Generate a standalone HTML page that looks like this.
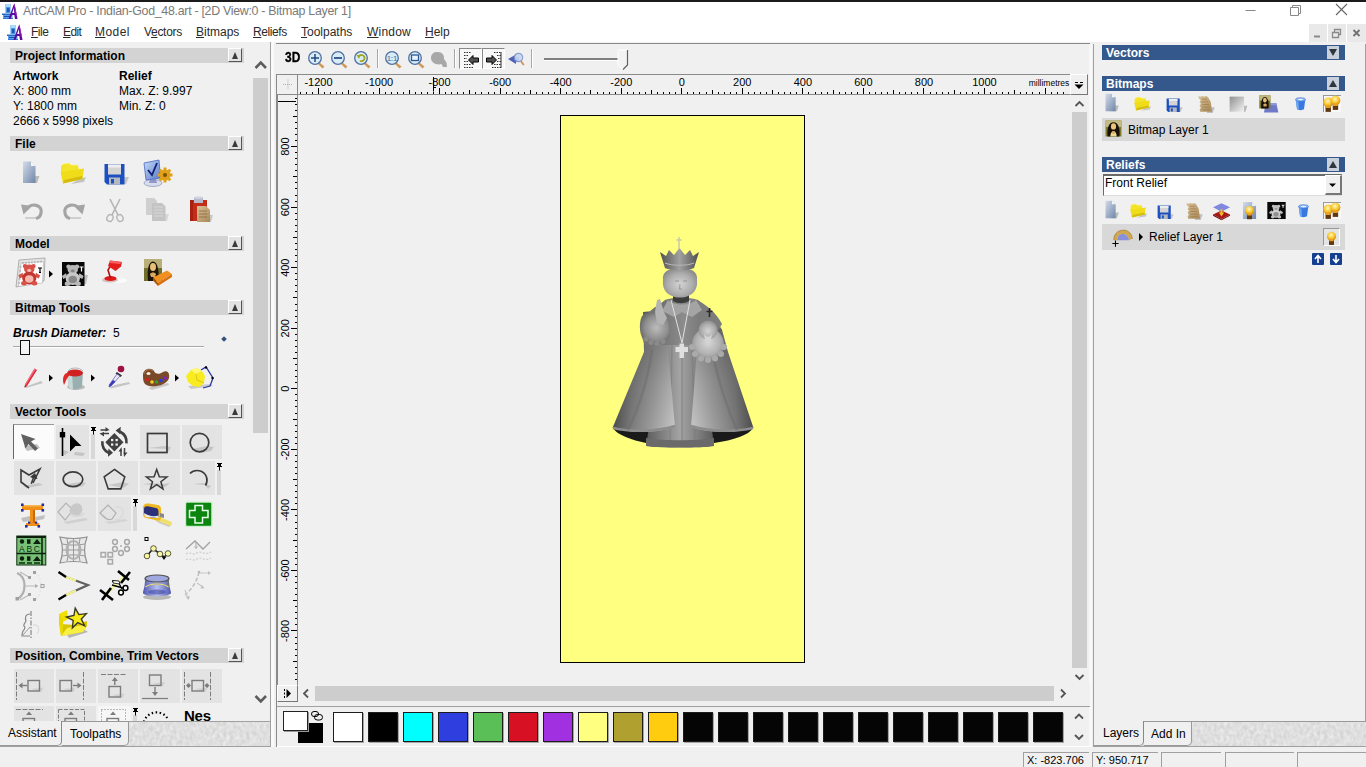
<!DOCTYPE html>
<html><head><meta charset="utf-8"><title>ArtCAM Pro</title>
<style>
*{box-sizing:border-box;margin:0;padding:0}
html,body{width:1366px;height:767px;overflow:hidden;background:#f0f0f0;font-family:"Liberation Sans",sans-serif;font-size:12px;color:#000}
#app{position:relative;width:1366px;height:767px;overflow:hidden}
#app div,#app span,#app b,#app i,#app svg{position:absolute}
#app span,#app b,#app i{white-space:nowrap}
#app svg{overflow:visible}
#topstrip{left:0;top:0;width:1366px;height:2px;background:#1b1b1b}
#titlebar{left:0;top:2px;width:1366px;height:20px;background:#fff}
#title{left:23px;top:2px;font-size:12.4px;color:#7a7a7a;line-height:15px;letter-spacing:-0.29px}
#menubar{left:0;top:22px;width:1366px;height:20px;background:#fff}
.mi{top:3px;font-size:12px;color:#2a2a2a;line-height:15px}
.mi u{text-decoration:underline}
.hdr{left:10px;width:234px;height:15px;background:#d3d3d3}
.hdr b{left:5px;top:1px;font-size:12px;line-height:15px;color:#000}
.hbtn{left:218px;top:0px;width:14px;height:14px;background:#e2e2e2;border-right:1px solid #555;border-bottom:1px solid #555;border-left:1px solid #fff;border-top:1px solid #fff}
.hbtn:after{content:"";position:absolute;left:2.500px;top:2.500px;border:3.500px solid transparent;border-top:0;border-bottom:7px solid #3a3a3a}

.t{font-size:12px;line-height:15px}
#left .t{margin-top:1px}
.tab{font-size:12px;line-height:15px;color:#000;margin-top:1px}
.tex{background:#dcdcdc;overflow:hidden}
#left{left:0;top:44px;width:270px;height:703px;background:#f0f0f0;overflow:hidden}
#main{left:0;top:0;width:0;height:0}
.rl{font-family:"Liberation Sans",sans-serif;font-size:11px;fill:#000}
.rs{font-family:"Liberation Sans",sans-serif;font-size:8.5px;fill:#000}
.sw{top:712px;width:30px;height:30px;border:1px solid #1c1c1c;box-shadow:1px 1px 0 rgba(0,0,0,.3)}
.rh{left:1102px;width:243px;height:15px;background:#34588c}
.rh b{left:4px;top:1px;font-size:12px;line-height:15px;color:#fff}
.rbtn{left:225px;top:1px;width:12px;height:13px;background:#c8d0dc}
.sb{top:752px;height:16px;border-left:1px solid #a0a0a0;border-top:1px solid #a0a0a0;background:#f0f0f0}
.sb span{left:3px;top:0px;font-size:11px;line-height:15px}

</style></head><body><div id="app">
<svg width="0" height="0" style="left:0;top:0"><defs>
<linearGradient id="gDoc" x1="0" y1="0" x2="1" y2="1"><stop offset="0" stop-color="#d4dcea"/><stop offset="1" stop-color="#6f86a8"/></linearGradient>
<linearGradient id="gGray" x1="0" y1="0" x2="0" y2="1"><stop offset="0" stop-color="#e4e4e4"/><stop offset="1" stop-color="#a0a0a0"/></linearGradient>
<linearGradient id="gBlue" x1="0" y1="0" x2="1" y2="1"><stop offset="0" stop-color="#c8dcf8"/><stop offset="1" stop-color="#5878c8"/></linearGradient>
<linearGradient id="gTan" x1="0" y1="0" x2="1" y2="1"><stop offset="0" stop-color="#d8c098"/><stop offset="1" stop-color="#a88858"/></linearGradient>
<linearGradient id="gSq" x1="0" y1="0" x2="1" y2="1"><stop offset="0" stop-color="#909090"/><stop offset="1" stop-color="#f4f4f4"/></linearGradient>
<radialGradient id="gBulb" cx=".45" cy=".35" r=".6"><stop offset="0" stop-color="#fff8c0"/><stop offset=".6" stop-color="#f8c830"/><stop offset="1" stop-color="#d89010"/></radialGradient>
<linearGradient id="gVase" x1="0" y1="0" x2="1" y2="0"><stop offset="0" stop-color="#5058b0"/><stop offset=".5" stop-color="#b8c0f0"/><stop offset="1" stop-color="#5058b0"/></linearGradient>
</defs></svg><div id="topstrip"></div>
<div id="titlebar"><svg style="left:2px;top:1px" width="16" height="16" viewBox="0 0 16 16"><path d="M3.500 1H8.500V10H3.500Z" fill="#4c98e8"/><path d="M4 1H8V4H4Z" fill="#a8dcf8"/><path d="M5 5H7.500V9H5Z" fill="#1c58b8"/><path d="M0 10.500H11V12H0Z" fill="#2868c8"/><path d="M1 12H10.500V15H1Z" fill="#58a0f0"/><path d="M2 13H8V14H2Z" fill="#1c50a8"/><path d="M1 15H11V16H1Z" fill="#3078d8"/><path d="M12.500 0.500L15 13L15.500 16H13L12.300 12H10L8.500 16H6.500L11.500 2Z" fill="#5c0c9c"/><path d="M11.800 5L12.300 10H10.200Z" fill="#fff"/><path d="M12.500 0.500L15 13L14 13L12 2Z" fill="#a030c8"/></svg><span id="title">ArtCAM Pro - Indian-God_48.art - [2D View:0 - Bitmap Layer 1]</span>
<svg style="left:1240px;top:-1px" width="126" height="20" viewBox="0 0 126 20"><path d="M5.5 9.5H15.5" stroke="#888" fill="none"/><path d="M50.500 6.500H58.500V14.500H50.500ZM52.500 6.500V4.500H60.500V12.500H58.500" stroke="#888" fill="none"/><path d="M96 3L107 14M107 3L96 14" stroke="#666" stroke-width="1.1" fill="none"/></svg>
</div>
<div id="menubar"><svg style="left:7px;top:2px" width="16" height="16" viewBox="0 0 16 16"><path d="M3.500 1H8.500V10H3.500Z" fill="#4c98e8"/><path d="M4 1H8V4H4Z" fill="#a8dcf8"/><path d="M5 5H7.500V9H5Z" fill="#1c58b8"/><path d="M0 10.500H11V12H0Z" fill="#2868c8"/><path d="M1 12H10.500V15H1Z" fill="#58a0f0"/><path d="M2 13H8V14H2Z" fill="#1c50a8"/><path d="M1 15H11V16H1Z" fill="#3078d8"/><path d="M12.500 0.500L15 13L15.500 16H13L12.300 12H10L8.500 16H6.500L11.500 2Z" fill="#5c0c9c"/><path d="M11.800 5L12.300 10H10.200Z" fill="#fff"/><path d="M12.500 0.500L15 13L14 13L12 2Z" fill="#a030c8"/></svg>
<span class="mi" style="left:31px;letter-spacing:-0.5px"><u>F</u>ile</span>
<span class="mi" style="left:63px;letter-spacing:-0.6px"><u>E</u>dit</span>
<span class="mi" style="left:95px;letter-spacing:0.45px"><u>M</u>odel</span>
<span class="mi" style="left:144px;letter-spacing:-0.3px">V<u>e</u>ctors</span>
<span class="mi" style="left:196px"><u>B</u>itmaps</span>
<span class="mi" style="left:253px;letter-spacing:-0.4px"><u>R</u>eliefs</span>
<span class="mi" style="left:301px"><u>T</u>oolpaths</span>
<span class="mi" style="left:367px;letter-spacing:0.2px"><u>W</u>indow</span>
<span class="mi" style="left:425px"><u>H</u>elp</span>
<div style="left:1309px;top:2px;width:18px;height:18px;background:#e9e9e9"></div><div style="left:1328px;top:2px;width:18px;height:18px;background:#e9e9e9"></div><div style="left:1347px;top:2px;width:19px;height:18px;background:#e9e9e9"></div>
<svg style="left:1310px;top:2px" width="56" height="18" viewBox="0 0 56 18"><path d="M4 12.500H10" stroke="#8a8a8a" stroke-width="2" fill="none"/><path d="M22.5 8.500H28.500V13.500H22.500ZM24.500 8V5.500H30.500V10.500H29" stroke="#8a8a8a" stroke-width="1.3" fill="none"/><path d="M43.500 6L49.500 12M49.500 6L43.500 12" stroke="#707070" stroke-width="1.8" fill="none"/></svg>
</div>
<div id="left">
<div class="hdr" style="top:4px"><b>Project Information</b><div class="hbtn"></div></div>
<b class="t" style="left:13px;top:24px">Artwork</b><b class="t" style="left:119px;top:24px">Relief</b>
<span class="t" style="left:13px;top:39px">X: 800 mm</span><span class="t" style="left:119px;top:39px">Max. Z: 9.997</span>
<span class="t" style="left:13px;top:54px">Y: 1800 mm</span><span class="t" style="left:119px;top:54px">Min. Z: 0</span>
<span class="t" style="left:13px;top:69px">2666 x 5998 pixels</span>
<div class="hdr" style="top:92px"><b>File</b><div class="hbtn"></div></div>
<svg style="left:15px;top:113px" width="32" height="32" viewBox="0 0 32 32"><path d="M20 19H24.500L22 26H14Z" fill="#bcbcbc"/><path d="M8 4.500H16L20.500 9V26H8Z" fill="url(#gDoc)"/><path d="M16 4.500L20.500 9H16Z" fill="#f4f6fa"/></svg><svg style="left:57px;top:113px" width="32" height="32" viewBox="0 0 32 32"><path d="M22 22L29 20L27 25L14 27Z" fill="#c4c4c4"/><path d="M4 9L6 7L12 6L14 8L21 8L22 14L4 17Z" fill="#f4e428"/><path d="M3.500 15L27 11.500L25.500 22L6 26.500Z" fill="#f0dc18"/><path d="M6 26.500L25.500 22L25 19L7 23Z" fill="#d4bc10"/><path d="M4 9L6 7L12 6L14 8L21 8" fill="none" stroke="#fff488" stroke-width=".8"/></svg><svg style="left:99px;top:113px" width="32" height="32" viewBox="0 0 32 32"><path d="M25 20H30L27 27H22Z" fill="#c4c4c4"/><path d="M5.500 7H25.500V27.500H8L5.500 25Z" fill="#1c50c0"/><rect x="9" y="7.500" width="13" height="10" fill="#d4d4d4"/><rect x="9" y="7.500" width="13" height="3" fill="#eeeeee"/><rect x="10" y="20.500" width="11" height="7" fill="#b4b8c0"/><rect x="12" y="22" width="3" height="4.500" fill="#2050c0"/></svg><svg style="left:141px;top:113px" width="32" height="32" viewBox="0 0 32 32"><ellipse cx="12" cy="26" rx="9" ry="3.500" fill="#d8dcec" stroke="#8890b8" stroke-width=".7"/><path d="M9 22H15L16 26H8Z" fill="#9098c8"/><path d="M3 6L18 3L19.500 21L5 23Z" fill="url(#gBlue)" stroke="#4868c0" stroke-width=".8"/><path d="M7 13L11 18L16 6" fill="none" stroke="#102070" stroke-width="1.8"/><circle cx="24" cy="18" r="5.500" fill="#e0a018"/><path d="M24 10.500V25.500M16.500 18H31.500M18.700 12.700L29.300 23.300M29.300 12.700L18.700 23.300" stroke="#e0a018" stroke-width="3"/><circle cx="24" cy="18" r="2" fill="#7a5008"/></svg><svg style="left:15.5px;top:150px" width="32" height="32" viewBox="0 0 32 32"><path d="M9 24H24" stroke="#d0d0d0" stroke-width="2"/><path d="M11 15C15 8 27 11 25 19C24.500 22 22 24 20 24.500" fill="none" stroke="#a4a4a4" stroke-width="3.200"/><path d="M5 10.500L16 12L7.500 20.500Z" fill="#a4a4a4"/></svg><svg style="left:57.5px;top:150px" width="32" height="32" viewBox="0 0 32 32"><path d="M8 24H23" stroke="#d0d0d0" stroke-width="2"/><path d="M21 15C17 8 5 11 7 19C7.500 22 10 24 12 24.500" fill="none" stroke="#a4a4a4" stroke-width="3.200"/><path d="M27 10.500L16 12L24.500 20.500Z" fill="#a4a4a4"/></svg><svg style="left:99px;top:150px" width="32" height="32" viewBox="0 0 32 32"><path d="M11 5L19 21M21 5L13 21" stroke="#b4b4b4" stroke-width="1.600" fill="none"/><ellipse cx="11" cy="24" rx="3" ry="3.500" fill="none" stroke="#b4b4b4" stroke-width="1.400" transform="rotate(25 11 24)"/><ellipse cx="21" cy="24" rx="3" ry="3.500" fill="none" stroke="#b4b4b4" stroke-width="1.400" transform="rotate(-25 21 24)"/></svg><svg style="left:141px;top:150px" width="32" height="32" viewBox="0 0 32 32"><path d="M22 20H28L26 27H22Z" fill="#d8d8d8"/><path d="M5 4H13L16 7V21H5Z" fill="#cfcfcf"/><path d="M11 9H21L24.500 12.500V27H11Z" fill="#c4c4c4"/><path d="M13 13H22M13 16H22M13 19H22M13 22H22" stroke="#d8d8d8" stroke-width="1"/></svg><svg style="left:184px;top:150px" width="32" height="32" viewBox="0 0 32 32"><path d="M24 21H29L27 28H24Z" fill="#c8c8c8"/><path d="M6 6H23V27H6Z" fill="#c42c18"/><path d="M6 6H9V27H6Z" fill="#a82010"/><path d="M10 3.500H19V9H10Z" fill="#b8b8cc"/><path d="M11.500 2.500H17.500V5H11.500Z" fill="#d0d0e0"/><path d="M13 12H22L26 16V28H13Z" fill="url(#gTan)"/><path d="M15 17H23M15 20H23M15 23H23" stroke="#8a6a40" stroke-width=".8"/></svg><svg style="left:14px;top:213px" width="32" height="32" viewBox="0 0 32 32"><path d="M5 3L31 1L30 24L2 30Z" fill="#e4e4e4" stroke="#a0a0a0" stroke-width=".8"/><path d="M7 6L29.500 4.500L28.500 26L4.500 29.500Z" fill="#fcfcfc" stroke="#b0b0b0" stroke-width=".6"/><path d="M9 5V7M12 5V7M15 4.700V6.700M18 4.500V6.500M21 4.300V6.300M24 4V6M27 3.800V5.800M5.500 10H7.500M5.200 14H7.200M4.800 18H6.800M4.500 22H6.500M4.200 26H6.200" stroke="#888" stroke-width=".7"/><g transform="translate(1,1.500) scale(.95)"><circle cx="10.500" cy="8" r="2.300" fill="#d85048"/><circle cx="19.500" cy="8" r="2.300" fill="#d85048"/><ellipse cx="15" cy="11" rx="5.500" ry="4.800" fill="#d85048"/><path d="M8 15L3.500 18L5 21L9 19Z M22 15L26.500 18L25 21L21 19Z" fill="#d85048"/><ellipse cx="15" cy="20.500" rx="7.500" ry="6.800" fill="#c03830"/><ellipse cx="15" cy="21.500" rx="4.500" ry="4" fill="#f8b8b0"/><ellipse cx="9.500" cy="26" rx="3" ry="2.300" fill="#d85048"/><ellipse cx="20.500" cy="26" rx="3" ry="2.300" fill="#d85048"/><ellipse cx="15" cy="12.500" rx="2.200" ry="1.600" fill="#f8b8b0"/></g><path d="M24 11H28M26 11V15.500M25 15.500H27" stroke="#000" stroke-width="1.200"/></svg><svg style="left:57px;top:214px" width="32" height="32" viewBox="0 0 32 32"><path d="M27 17H31L29 26H27Z" fill="#c0c0c0"/><rect x="5" y="4" width="22.500" height="24" fill="#080808"/><g transform="translate(1.500,1) scale(.95)"><circle cx="10.500" cy="8" r="2.300" fill="#b8b8b8"/><circle cx="19.500" cy="8" r="2.300" fill="#b8b8b8"/><ellipse cx="15" cy="11" rx="5.500" ry="4.800" fill="#b8b8b8"/><path d="M8 15L3.500 18L5 21L9 19Z M22 15L26.500 18L25 21L21 19Z" fill="#b8b8b8"/><ellipse cx="15" cy="20.500" rx="7.500" ry="6.800" fill="#c8c8c8"/><ellipse cx="15" cy="21.500" rx="4.500" ry="4" fill="#888"/><ellipse cx="9.500" cy="26" rx="3" ry="2.300" fill="#b8b8b8"/><ellipse cx="20.500" cy="26" rx="3" ry="2.300" fill="#b8b8b8"/><ellipse cx="15" cy="12.500" rx="2.200" ry="1.600" fill="#888"/></g><path d="M22.500 9H26.500M24.500 9V13.500" stroke="#fff" stroke-width="1.200"/></svg><svg style="left:98px;top:212px" width="32" height="32" viewBox="0 0 32 32"><ellipse cx="21" cy="24.500" rx="8" ry="2.500" fill="#fafafa"/><ellipse cx="12" cy="24" rx="8" ry="2.600" fill="#c8a8a8" opacity=".7"/><ellipse cx="12.500" cy="22.500" rx="6" ry="2.400" fill="#e01818"/><path d="M12.500 22L10 14L13 9" fill="none" stroke="#b01010" stroke-width="1.600"/><path d="M12 4.500L24 6L23 10.500L17.500 15L10 10Z" fill="#e41c1c"/><path d="M12 4.500L24 6L22 8L12 7Z" fill="#f46060"/></svg><svg style="left:141px;top:213px" width="32" height="32" viewBox="0 0 32 32"><rect x="3" y="2" width="18" height="22" fill="#70702c"/><rect x="3" y="2" width="18" height="9" fill="#b8b078"/><path d="M7 24C6 14 7 5 12 4.500C17 5 18 14 17.500 24Z" fill="#1c1408"/><ellipse cx="12" cy="10" rx="3" ry="4" fill="#e8c078"/><path d="M9 17C10.500 15 13.500 15 15 17L14 20H10Z" fill="#d8a860"/><path d="M12 20.500L26 13.500L31 17L17 26Z" fill="#f09020"/><path d="M12 20.500L17 26V29L12 23.500Z" fill="#a85808"/><path d="M17 26L31 17V20L17 29Z" fill="#d87010"/></svg><svg style="left:35px;top:214px" width="32" height="32" viewBox="0 0 32 32"><path d="M14 12.500L18 16L14 19.500Z" fill="#000"/></svg><svg style="left:16px;top:318px" width="32" height="32" viewBox="0 0 32 32"><path d="M9 25L25 19L27 21L10 26Z" fill="#c4c4c4"/><path d="M18.500 6.500L21 8L11 24L8.500 25.500L9 22.500Z" fill="#e02838"/><path d="M18.500 6.500L19.700 7.200L9.500 23.500L9 22.500Z" fill="#f47080"/><path d="M8.500 25.500L9 23.500L10.500 24.500Z" fill="#444"/></svg><svg style="left:58px;top:318px" width="32" height="32" viewBox="0 0 32 32"><ellipse cx="18" cy="25" rx="9" ry="3" fill="#bcbcbc"/><path d="M9 12L25 10L24 25C20 28 14 28 11 26Z" fill="#9ab0b0"/><path d="M9 12L14 11.500L15 27C13 27 12 26.500 11 26Z" fill="#c8d8d8"/><ellipse cx="17" cy="11" rx="8" ry="3.500" fill="#d02020"/><path d="M9 11C5 12 4 18 6 23C8 20 8 16 12 13Z" fill="#e02828"/><path d="M10 9C13 5 21 5 25 9" fill="none" stroke="#b0b8b8" stroke-width="1"/></svg><svg style="left:101px;top:318px" width="32" height="32" viewBox="0 0 32 32"><path d="M9 25L14 23L28 20L29 22L16 25L10 26.500Z" fill="#c4c4c4"/><circle cx="20" cy="7" r="3.300" fill="#a01040"/><path d="M16 10L21 13.500L19.500 15L14.500 11.500Z" fill="#303030"/><path d="M16 12L19 14L10 24L8 25L8.500 22.500Z" fill="#e8e8f8" stroke="#5050a0" stroke-width=".7"/><path d="M12 18L14.500 19.500L10 24L8 25L8.500 22.500Z" fill="#3838c0"/></svg><svg style="left:140px;top:318px" width="32" height="32" viewBox="0 0 32 32"><path d="M8 26L28 21L29 23L12 28Z" fill="#c8c8c8"/><path d="M3 13C3 6 12 5 14 9C15 12 19 13 23 10C27 8 30 11 29 16C27 24 10 27 5 22C3 20 3 16 3 13Z" fill="#7a4a28"/><path d="M4 12C5 7 11 6.500 13 9" fill="none" stroke="#a87850" stroke-width="1"/><ellipse cx="8.500" cy="11.500" rx="2" ry="1.600" fill="#f0f0f0"/><circle cx="7.500" cy="17.500" r="1.800" fill="#d82020"/><circle cx="12" cy="20" r="1.800" fill="#f0d020"/><circle cx="16.500" cy="20" r="1.800" fill="#30a030"/><circle cx="21" cy="18.500" r="1.800" fill="#2040e0"/><circle cx="25" cy="16" r="1.800" fill="#8020c0"/></svg><svg style="left:183px;top:318px" width="32" height="32" viewBox="0 0 32 32"><path d="M5 24L28 22L30 24L8 27Z" fill="#c8c8c8"/><path d="M18 8L23 5L30 16L27 24L20 26" fill="none" stroke="#2838a0" stroke-width="1.300"/><circle cx="23" cy="5.500" r="1.200" fill="#000"/><circle cx="29.500" cy="16" r="1.200" fill="#000"/><path d="M3 14L8 8L14 6L19 9L22 14L21 21L16 25L10 24L5 20Z" fill="#f8ec20"/><path d="M8 8L14 6L19 9L13 12Z" fill="#fff870"/><path d="M13 12L14 18L21 21" fill="none" stroke="#d8c810" stroke-width="1"/></svg><svg style="left:35px;top:318px" width="32" height="32" viewBox="0 0 32 32"><path d="M14 12.500L18 16L14 19.500Z" fill="#000"/></svg><svg style="left:77px;top:318px" width="32" height="32" viewBox="0 0 32 32"><path d="M14 12.500L18 16L14 19.500Z" fill="#000"/></svg><svg style="left:161px;top:318px" width="32" height="32" viewBox="0 0 32 32"><path d="M14 12.500L18 16L14 19.500Z" fill="#000"/></svg>
<div class="hdr" style="top:192px"><b>Model</b><div class="hbtn"></div></div>
<!--MODELICONS-->
<div class="hdr" style="top:256px"><b>Bitmap Tools</b><div class="hbtn"></div></div>
<b class="t" style="left:13px;top:281px;font-style:italic">Brush Diameter:</b><span class="t" style="left:113px;top:281px">5</span>
<div style="left:13px;top:302px;width:191px;height:2px;background:#a8a8a8;border-bottom:1px solid #fff"></div>
<div style="left:20px;top:296px;width:10px;height:15px;background:#f4f4f4;border:1px solid #111"></div>
<div style="left:222px;top:293px;width:4px;height:4px;background:#34507c;transform:rotate(45deg)"></div>
<!--BITMAPICONS-->
<div class="hdr" style="top:360px"><b>Vector Tools</b><div class="hbtn"></div></div>
<div style="left:13px;top:380px;width:41px;height:35px;background:#fbfbfb;border-left:1px solid #666;border-top:1px solid #999"></div><svg style="left:13px;top:380px" width="42" height="36" viewBox="0 0 42 36"><path d="M11 22L24 20L27 24L14 27Z" fill="#c0c0c0"/><path d="M8 10L22.500 15L18 17.500L25 24.500L22 27L15.500 20L12.500 24.500Z" fill="#606060"/></svg><div style="left:56px;top:381px;width:33px;height:34px;background:#e3e3e3"></div><div style="left:91px;top:390px;width:4px;height:25px;background:#d8d8d8"></div><svg style="left:91px;top:383px" width="5" height="8" viewBox="0 0 5 8"><path d="M0 0H5V1H4V3H5V4H0V3H1V1H0Z" fill="#000"/><path d="M2 4H3V7.500H2Z" fill="#000"/></svg><svg style="left:55px;top:380px" width="42" height="36" viewBox="0 0 42 36"><path d="M9 26L14 28L10 31L6 30Z M20 28L30 29L28 32L19 31Z" fill="#c4c4c4"/><path d="M7.500 4V32" stroke="#000" stroke-width="1.600"/><rect x="4.800" y="8" width="5.400" height="5.400" fill="#000"/><path d="M15 10.500L26.500 22H20.500L15 27.500Z" fill="#000"/></svg><svg style="left:97px;top:380px" width="42" height="36" viewBox="0 0 42 36"><path d="M17.400 9L26.500 18.300L17.400 27.600L8.300 18.300Z" fill="#404040"/><g fill="#f0f0f0"><rect x="14" y="14.900" width="2.300" height="2.300"/><rect x="18.500" y="14.900" width="2.300" height="2.300"/><rect x="14" y="19.400" width="2.300" height="2.300"/><rect x="18.500" y="19.400" width="2.300" height="2.300"/></g><path d="M29.450 19.350A12.100 12.100 0 0 0 22.800 7.500" fill="none" stroke="#404040" stroke-width="2.600"/><path d="M18.600 6.600L23.800 2.800L23.200 10.200Z" fill="#404040"/><path d="M5.350 17.250A12.100 12.100 0 0 0 12 29.100" fill="none" stroke="#404040" stroke-width="2.600"/><path d="M16 28.800L11 32.800L11.400 24.600Z" fill="#404040"/><path d="M3.500 6H9M12 9.500H6" stroke="#404040" stroke-width="1.500"/><path d="M8.500 3L12.500 6L8.500 7.500ZM7 12.500L2.500 9.500L7 8Z" fill="#404040"/><path d="M24 32V26.500M27.500 24V29.500" stroke="#404040" stroke-width="1.500"/><path d="M21.500 27.500L24.500 23L25 27.500ZM30.500 28.500L27 33L26.500 28.500Z" fill="#404040"/></svg><div style="left:140px;top:381px;width:40px;height:34px;background:#e3e3e3"></div><svg style="left:139px;top:380px" width="42" height="36" viewBox="0 0 42 36"><path d="M9 24L26 22L32 23L30 27L28 28V25Z" fill="#c6c6c6"/><rect x="8.500" y="9.500" width="19.500" height="19" fill="none" stroke="#3a3a3a" stroke-width="1.700"/></svg><div style="left:182px;top:381px;width:40px;height:34px;background:#e3e3e3"></div><svg style="left:181px;top:380px" width="42" height="36" viewBox="0 0 42 36"><path d="M11 25L26 22L33 23L30 27L20 29Z" fill="#c6c6c6"/><circle cx="18.500" cy="18.600" r="9.300" fill="none" stroke="#3a3a3a" stroke-width="1.700"/></svg><div style="left:14px;top:417px;width:40px;height:34px;background:#e3e3e3"></div><svg style="left:13px;top:416px" width="42" height="36" viewBox="0 0 42 36"><path d="M10 26L26 23L30 25L14 28Z" fill="#c6c6c6"/><path d="M16 28L8 22V10L16 15L27 9L20 23" fill="none" stroke="#3a3a3a" stroke-width="1.600"/><path d="M22 13L24.500 19L21 18.500L19 24L17.500 23.500L19.500 18L17 17Z" fill="#3a3a3a"/></svg><div style="left:56px;top:417px;width:40px;height:34px;background:#e3e3e3"></div><svg style="left:55px;top:416px" width="42" height="36" viewBox="0 0 42 36"><path d="M12 24L26 22L31 23L28 26L20 28Z" fill="#c6c6c6"/><ellipse cx="18" cy="19.300" rx="9.800" ry="7.400" fill="none" stroke="#3a3a3a" stroke-width="1.700"/></svg><div style="left:98px;top:417px;width:40px;height:34px;background:#e3e3e3"></div><svg style="left:97px;top:416px" width="42" height="36" viewBox="0 0 42 36"><path d="M11 25L26 22L32 24L26 28Z" fill="#c6c6c6"/><path d="M17.5 9.4L27.8 16.9L23.8 28.9L11.2 28.9L7.2 16.9Z" fill="none" stroke="#3a3a3a" stroke-width="1.600"/></svg><div style="left:140px;top:417px;width:40px;height:34px;background:#e3e3e3"></div><svg style="left:139px;top:416px" width="42" height="36" viewBox="0 0 42 36"><path d="M4 24L12 23L24 24L31 23L26 27Z" fill="#c6c6c6"/><path d="M17.7 9.5L20.3 16.7L28.0 17.0L21.9 21.7L24.0 29.0L17.7 24.7L11.4 29.0L13.5 21.7L7.4 17.0L15.1 16.7Z" fill="none" stroke="#3a3a3a" stroke-width="1.500"/></svg><div style="left:182px;top:417px;width:33px;height:34px;background:#e3e3e3"></div><div style="left:217px;top:426px;width:4px;height:25px;background:#d8d8d8"></div><svg style="left:217px;top:419px" width="5" height="8" viewBox="0 0 5 8"><path d="M0 0H5V1H4V3H5V4H0V3H1V1H0Z" fill="#000"/><path d="M2 4H3V7.500H2Z" fill="#000"/></svg><svg style="left:181px;top:416px" width="42" height="36" viewBox="0 0 42 36"><path d="M12 24L22 23L30 26L27 29L24 25Z" fill="#c6c6c6"/><path d="M9 13.500C14 8.500 23 10 25.500 17C26.500 20 26 23 24.500 25.500" fill="none" stroke="#3a3a3a" stroke-width="1.700"/></svg><svg style="left:13px;top:452px" width="42" height="36" viewBox="0 0 42 36"><path d="M8 22L17 20V25L10 26ZM22 21L32 19L31 23L22 25Z" fill="#c0c0c0"/><path d="M9 9H30V14H22V27H26V30H13V27H17V14H9Z" fill="#f09018"/><path d="M9 9H30V10.500H9Z" fill="#f8b850"/><path d="M20 14H22V27H20Z" fill="#c86808"/><g fill="#2828a0"><rect x="8" y="7.500" width="2.600" height="2.600"/><rect x="28.500" y="7.500" width="2.600" height="2.600"/><rect x="8" y="13" width="2.600" height="2.600"/><rect x="28.500" y="13" width="2.600" height="2.600"/><rect x="12" y="29" width="2.600" height="2.600"/><rect x="24.500" y="29" width="2.600" height="2.600"/><rect x="15" y="25.500" width="2.200" height="2.200"/><rect x="22" y="25.500" width="2.200" height="2.200"/></g></svg><div style="left:56px;top:453px;width:40px;height:34px;background:#e3e3e3"></div><svg style="left:55px;top:452px" width="42" height="36" viewBox="0 0 42 36"><path d="M8 26L30 22L33 24L12 28Z" fill="#d0d0d0"/><path d="M3 16L11 7L18 14L10 24Z" fill="none" stroke="#b4b4b4" stroke-width="1.200"/><ellipse cx="21" cy="14" rx="6" ry="7" fill="#c8c8c8" transform="rotate(35 21 14)"/><path d="M16 18C20 22 27 20 29 17" fill="none" stroke="#d8d8d8" stroke-width="2"/></svg><div style="left:98px;top:453px;width:33px;height:34px;background:#e3e3e3"></div><div style="left:133px;top:462px;width:4px;height:25px;background:#d8d8d8"></div><svg style="left:133px;top:455px" width="5" height="8" viewBox="0 0 5 8"><path d="M0 0H5V1H4V3H5V4H0V3H1V1H0Z" fill="#000"/><path d="M2 4H3V7.500H2Z" fill="#000"/></svg><svg style="left:97px;top:452px" width="42" height="36" viewBox="0 0 42 36"><path d="M8 26L28 23L31 25L12 28Z" fill="#d4d4d4"/><path d="M3 17L11 9L19 17L15 23C11 25 8 22 3 17Z" fill="none" stroke="#b0b0b0" stroke-width="1.200"/><path d="M18 12C22 9 26 12 26 17C26 21 22 24 18 24" fill="none" stroke="#dadada" stroke-width="1.500"/></svg><svg style="left:139px;top:452px" width="42" height="36" viewBox="0 0 42 36"><path d="M16 24L28 25L33 28L30 31L20 27Z" fill="#c8c8c8"/><path d="M18 20L33 26L31.500 30L16 24Z" fill="#f0e070"/><path d="M4 12C4 8 7 7 10 7.500L19 9C21 9.500 22 11 22 13V22C22 24 20 25 18 24.500L7 22C5 21.500 4 20 4 18Z" fill="#f0b820"/><path d="M5 13C5 10 8 10 10 10.500L17 12C19 12.500 19.500 14 19.500 15.500V21C16 23 10 22 5 18Z" fill="#2c3078"/><path d="M5 17C9 20 15 21 19.500 19.500V22L7 21C6 20 5 19 5 17Z" fill="#e8e8f0"/><path d="M21 17L25 18V22L21 21Z" fill="#888"/></svg><svg style="left:181px;top:452px" width="42" height="36" viewBox="0 0 42 36"><rect x="4" y="5.500" width="27.500" height="25.500" rx="1.500" fill="#c8f0c8"/><rect x="5.200" y="6.700" width="25" height="23" rx="1" fill="#0c8410"/><path d="M14 9.500H21.500V14.500H27V21.500H21.500V27H14V21.500H8.500V14.500H14Z" fill="none" stroke="#e8ffe8" stroke-width="1.500"/></svg><svg style="left:13px;top:488px" width="42" height="36" viewBox="0 0 42 36"><rect x="3.800" y="4" width="29" height="29" fill="#78c078"/><rect x="3.800" y="4" width="29" height="29" fill="none" stroke="#103010" stroke-width="1"/><path d="M3.800 21.500H32.800M29 4V33" stroke="#082008" stroke-width="1.500"/><path d="M3.800 4H32.800V6H3.800Z" fill="#0c200c"/><circle cx="9" cy="9.500" r="2.200" fill="#0c200c"/><rect x="14" y="7.300" width="3.500" height="4.500" fill="#0c200c"/><path d="M20 12L24 7L28 12Z" fill="#0c200c"/><circle cx="9" cy="26.500" r="2.200" fill="#0c200c"/><rect x="14" y="24.300" width="3.500" height="4.500" fill="#0c200c"/><path d="M20 29L24 24L28 29Z" fill="#0c200c"/><text x="16.500" y="19.500" text-anchor="middle" font-family="Liberation Sans,sans-serif" font-size="8.500" fill="#0c300c" textLength="21">ABC</text><path d="M6 31H12M14 31H19M21 31H27" stroke="#0c300c" stroke-width="1.500"/></svg><svg style="left:55px;top:488px" width="42" height="36" viewBox="0 0 42 36"><path d="M5 5C14 7 23 7 32 5C29 13 29 23 32 31C23 29 14 29 5 31C8 23 8 13 5 5Z" fill="#e8e8e8" stroke="#909090" stroke-width="1.200"/><path d="M12 6.500C13.500 14 13.500 22 12 29.500M18.500 7V29M25 6.500C23.500 14 23.500 22 25 29.500M7 12C15 13.500 22 13.500 30 12M7.500 18H29.500M7 24C15 22.500 22 22.500 30 24" fill="none" stroke="#9a9a9a" stroke-width="1"/><ellipse cx="18.500" cy="18" rx="7" ry="9" fill="none" stroke="#b0b0b0" stroke-width="2"/></svg><svg style="left:97px;top:488px" width="42" height="36" viewBox="0 0 42 36"><g fill="none" stroke="#a8a8a8" stroke-width="1.500"><rect x="4" y="20.500" width="4.500" height="4.500"/><rect x="11" y="20.500" width="4.500" height="4.500"/><rect x="11" y="27.500" width="4.500" height="4.500"/><circle cx="18" cy="10" r="2.400"/><circle cx="18" cy="17" r="2.400"/><circle cx="24" cy="21" r="2.400"/><circle cx="30" cy="10" r="2.400"/><circle cx="30" cy="17" r="2.400"/></g><circle cx="24" cy="14" r=".9" fill="#a8a8a8"/></svg><svg style="left:139px;top:488px" width="42" height="36" viewBox="0 0 42 36"><rect x="6" y="5.500" width="3" height="3" fill="#fff" stroke="#000" stroke-width="1"/><path d="M8 24L14 16.500L21 22L25 25L29 21.500" fill="none" stroke="#202020" stroke-width="1.600"/><g fill="#f8f8a0" stroke="#303020" stroke-width=".8"><circle cx="8" cy="24" r="2.800"/><circle cx="14.500" cy="16.500" r="2.800"/><circle cx="21" cy="22" r="2.800"/><circle cx="29" cy="21.500" r="2.800"/></g><path d="M22.500 24.500L25 28L27.500 24.500Z" fill="#101010"/></svg><svg style="left:181px;top:488px" width="42" height="36" viewBox="0 0 42 36"><path d="M5 17L14 9L22 17L29 10" fill="none" stroke="#a0a0a0" stroke-width="1.300"/><path d="M15 10V16M13.500 14.500L15 16.500L16.500 14.500" fill="none" stroke="#a8a8a8" stroke-width="1"/><path d="M5 22C9 19 12 24 16 21C20 18 23 24 30 20M5 28C9 25 12 30 16 27C20 24 23 30 30 26" fill="none" stroke="#d0d0d0" stroke-width="1.300" stroke-dasharray="2 1.500"/></svg><svg style="left:13px;top:524px" width="42" height="36" viewBox="0 0 42 36"><path d="M4 5C14 9 14 26 4 31" fill="none" stroke="#b0b0b0" stroke-width="2.200"/><path d="M22 4C30 10 30 26 22 32" fill="none" stroke="#e0e0e0" stroke-width="1.200" stroke-dasharray="2 2"/><path d="M7 4L16 9M12 18H24M7 32L16 27" stroke="#b8b8b8" stroke-width="1.200"/><g fill="#a0a0a0"><rect x="2.500" y="29" width="3.500" height="3.500"/><rect x="15" y="8" width="3" height="3"/><rect x="15" y="25" width="3" height="3"/><rect x="20" y="3" width="3" height="3"/><rect x="20" y="30" width="3" height="3"/></g><rect x="28" y="16.500" width="3" height="3" fill="none" stroke="#a0a0a0"/><path d="M22 16L25.500 18L22 20Z" fill="#b0b0b0"/></svg><svg style="left:55px;top:524px" width="42" height="36" viewBox="0 0 42 36"><path d="M11 9L33 17L11 27" fill="none" stroke="#606060" stroke-width="2.200"/><path d="M11 9L21 12.700M11 27L21 22.600" stroke="#f4f4a0" stroke-width="2.600"/><path d="M11 9L21 12.700M11 27L21 22.600" stroke="#d8d860" stroke-width=".8" stroke-dasharray="1.500 1.500"/><path d="M3.500 4L11 9M3.500 31.500L11 27" stroke="#000" stroke-width="2.400"/></svg><svg style="left:97px;top:524px" width="42" height="36" viewBox="0 0 42 36"><path d="M8 27L28 8" stroke="#f4f4a0" stroke-width="3"/><path d="M3 22L16 32M5 32L14 20M21 3L32 12M24 15L33 4" stroke="#000" stroke-width="2.600"/><path d="M15 13L21 13.500L25 21M15 17L26 20" stroke="#000" stroke-width="1.300" fill="none"/><path d="M16 12.500L22 13L23 16L16 15Z" fill="#fff" stroke="#000" stroke-width=".8"/><circle cx="24" cy="24.500" r="2.400" fill="#fff" stroke="#000" stroke-width="1.500"/><circle cx="28.500" cy="20" r="2.400" fill="#fff" stroke="#000" stroke-width="1.500"/></svg><svg style="left:139px;top:524px" width="42" height="36" viewBox="0 0 42 36"><ellipse cx="18" cy="29" rx="14" ry="3" fill="#b8b8b8"/><path d="M6 11C6 20 4 22 4 25C4 29 32 29 32 25C32 22 30 20 30 11Z" fill="url(#gVase)"/><ellipse cx="18" cy="10.500" rx="12" ry="3.500" fill="#a0a8e0" stroke="#505050" stroke-width="1.200"/><path d="M6.500 12V19C12 15 24 15 29.500 19V12" fill="none" stroke="#707070" stroke-width="1"/><path d="M6.500 19C12 15 24 15 29.500 19" fill="none" stroke="#e8e080" stroke-width="1.200"/><ellipse cx="18" cy="24" rx="9" ry="2.500" fill="#4048a8" opacity=".6"/></svg><svg style="left:181px;top:524px" width="42" height="36" viewBox="0 0 42 36"><path d="M18 4C16 14 10 22 4 27" fill="none" stroke="#c0c0c0" stroke-width="1.600" stroke-dasharray="4 2"/><path d="M19 5H28M16 15L22 19M4 22L7 31" stroke="#c8c8c8" stroke-width="1.200"/><path d="M27 3L30 5L27 7ZM21 17L23.500 20.500L19.500 20.500ZM5 29L7.500 32L9 28Z" fill="#c0c0c0"/><circle cx="18" cy="4" r="1.300" fill="#b8b8b8"/></svg><svg style="left:13px;top:561.0px" width="42" height="36" viewBox="0 0 42 36"><path d="M18 6V33" stroke="#707070" stroke-width="1" stroke-dasharray="5 1.500 1.500 1.500"/><path d="M17 9C12 9 12 13 13 16C12 18 10 20 11 21C12 22 12 24 10 26C9 28 9 30 9 31H17" fill="none" stroke="#888" stroke-width="1.200"/><path d="M10 30L17 22" stroke="#999" stroke-width="1"/><path d="M20 20C26 19 27 25 24 29" fill="none" stroke="#dcdcdc" stroke-width="1.200"/></svg><svg style="left:55px;top:561.0px" width="42" height="36" viewBox="0 0 42 36"><path d="M12 30L30 25L33 27L14 33Z" fill="#b8b8b8"/><path d="M4 9L12 5L13 14L5 19Z" fill="#f0e000"/><path d="M5 19L6 31L28 27L32 21L32 16L20 20Z" fill="#d8c400"/><path d="M6 31L12 23L28 20L32 21L28 27Z" fill="#f8f040"/><path d="M4 9V19L6 31L8 28V14Z" fill="#e8d800"/><path d="M20.2 3.2L23.9 9.6L31.3 8.6L26.3 14.1L29.6 20.8L22.7 17.7L17.4 22.9L18.2 15.5L11.6 12.0L18.9 10.5Z" fill="#f8ec18" stroke="#383820" stroke-width="1.400"/></svg>
<div class="hdr" style="top:604px"><b>Position, Combine, Trim Vectors</b><div class="hbtn"></div></div>
<div style="left:14px;top:625.0px;width:40px;height:34px;background:#e3e3e3"></div><svg style="left:13px;top:624.0px" width="42" height="36" viewBox="0 0 42 36"><path d="M3.500 4V32" stroke="#7c7c7c" stroke-width="1" stroke-dasharray="5 1.500"/><path d="M18 21.0L30.5 19.5L28.5 24.0Z" fill="#d0d0d0"/><rect x="15" y="12.5" width="11.5" height="10.5" fill="none" stroke="#7c7c7c" stroke-width="1.400"/><path d="M8 17.500H14" stroke="#7c7c7c" stroke-width="1.400"/><path d="M5.500 17.500L9.500 14.500V20.500Z" fill="#7c7c7c"/></svg><div style="left:56px;top:625.0px;width:40px;height:34px;background:#e3e3e3"></div><svg style="left:55px;top:624.0px" width="42" height="36" viewBox="0 0 42 36"><path d="M28.500 4V32" stroke="#7c7c7c" stroke-width="1" stroke-dasharray="5 1.500"/><path d="M8 21.0L20.5 19.5L18.5 24.0Z" fill="#d0d0d0"/><rect x="5" y="12.5" width="11.5" height="10.5" fill="none" stroke="#7c7c7c" stroke-width="1.400"/><path d="M18 17.500H24" stroke="#7c7c7c" stroke-width="1.400"/><path d="M26.500 17.500L22.500 14.500V20.500Z" fill="#7c7c7c"/></svg><div style="left:98px;top:625.0px;width:40px;height:34px;background:#e3e3e3"></div><svg style="left:97px;top:624.0px" width="42" height="36" viewBox="0 0 42 36"><path d="M4 6.500H30" stroke="#7c7c7c" stroke-width="1" stroke-dasharray="5 1.500"/><path d="M15 27.0L27.5 25.5L25.5 30.0Z" fill="#d0d0d0"/><rect x="12" y="18.5" width="11.5" height="10.5" fill="none" stroke="#7c7c7c" stroke-width="1.400"/><path d="M17.800 12V17" stroke="#7c7c7c" stroke-width="1.400"/><path d="M17.800 9L14.800 13H20.800Z" fill="#7c7c7c"/></svg><div style="left:140px;top:625.0px;width:40px;height:34px;background:#e3e3e3"></div><svg style="left:139px;top:624.0px" width="42" height="36" viewBox="0 0 42 36"><path d="M13.5 15.5L26.0 14.0L24.0 18.5Z" fill="#d0d0d0"/><rect x="10.5" y="7" width="11.5" height="10.5" fill="none" stroke="#7c7c7c" stroke-width="1.400"/><path d="M16 19V25" stroke="#7c7c7c" stroke-width="1.400"/><path d="M16 28L13 24H19Z" fill="#7c7c7c"/><path d="M3 30.500H29" stroke="#7c7c7c" stroke-width="1.200"/></svg><div style="left:182px;top:625.0px;width:40px;height:34px;background:#e3e3e3"></div><svg style="left:181px;top:624.0px" width="42" height="36" viewBox="0 0 42 36"><path d="M3.500 4V32M29.500 4V32" stroke="#7c7c7c" stroke-width="1" stroke-dasharray="5 1.500"/><path d="M14 21.0L26.5 19.5L24.5 24.0Z" fill="#d0d0d0"/><rect x="11" y="12.5" width="11.5" height="10.5" fill="none" stroke="#7c7c7c" stroke-width="1.400"/><path d="M5 17.500L7.500 15L10 17.500L7.500 20ZM23.500 17.500L26 15L28.500 17.500L26 20Z" fill="#7c7c7c"/></svg><div style="left:14px;top:662.0px;width:40px;height:34px;background:#e3e3e3"></div><svg style="left:13px;top:661.0px" width="42" height="36" viewBox="0 0 42 36"><path d="M3 4.500H30" stroke="#7c7c7c" stroke-width="1" stroke-dasharray="5 1.500"/><path d="M16 6.500L13 10H19Z" fill="#7c7c7c"/><path d="M13 22.0L25.5 20.5L23.5 25.0Z" fill="#d0d0d0"/><rect x="10" y="13.5" width="11.5" height="10.5" fill="none" stroke="#7c7c7c" stroke-width="1.400"/></svg><div style="left:56px;top:662.0px;width:40px;height:34px;background:#e3e3e3"></div><svg style="left:55px;top:661.0px" width="42" height="36" viewBox="0 0 42 36"><rect x="3.500" y="4.500" width="26" height="28" fill="none" stroke="#7c7c7c" stroke-width="1" stroke-dasharray="4 1.500"/><path d="M16 6.500L13 10H19Z" fill="#7c7c7c"/><path d="M13 22.0L25.5 20.5L23.5 25.0Z" fill="#d0d0d0"/><rect x="10" y="13.5" width="11.5" height="10.5" fill="none" stroke="#7c7c7c" stroke-width="1.400"/></svg><div style="left:98px;top:662.0px;width:33px;height:34px;background:#f6f6f6"></div><div style="left:133px;top:671.0px;width:4px;height:25px;background:#d8d8d8"></div><svg style="left:133px;top:664.0px" width="5" height="8" viewBox="0 0 5 8"><path d="M0 0H5V1H4V3H5V4H0V3H1V1H0Z" fill="#000"/><path d="M2 4H3V7.500H2Z" fill="#000"/></svg><svg style="left:97px;top:661.0px" width="42" height="36" viewBox="0 0 42 36"><rect x="4.500" y="4.500" width="24" height="28" fill="none" stroke="#7c7c7c" stroke-width="1" stroke-dasharray="1 2"/><path d="M16 6.500L13 10H19Z" fill="#7c7c7c"/><path d="M13 22.0L25.5 20.5L23.5 25.0Z" fill="#d0d0d0"/><rect x="10" y="13.5" width="11.5" height="10.5" fill="none" stroke="#7c7c7c" stroke-width="1.400"/></svg><svg style="left:139px;top:661.0px" width="42" height="36" viewBox="0 0 42 36"><path d="M5 17C7 9 16 5 24 9C26 10 28 12 29 15" fill="none" stroke="#000" stroke-width="2.200" stroke-dasharray="1.500 2.500"/></svg><svg style="left:181px;top:661.0px" width="42" height="36" viewBox="0 0 42 36"><text x="3" y="16" font-family="Liberation Sans,sans-serif" font-weight="bold" font-size="15" fill="#000" textLength="27">Nes</text><text x="3" y="27" font-family="Liberation Sans,sans-serif" font-weight="bold" font-size="15" fill="#000" textLength="27">ting</text></svg>
<!-- scrollbar -->
<div style="left:253px;top:12px;width:17px;height:666px;background:#f0f0f0"></div>
<div style="left:253px;top:34px;width:15px;height:355px;background:#cdcdcd"></div>
<svg style="left:253px;top:13px" width="17" height="17" viewBox="0 0 17 17"><path d="M2.500 11 L7.800 5.700 L13 11" fill="none" stroke="#5c5c5c" stroke-width="2.600"/></svg>
<svg style="left:253px;top:646px" width="17" height="17" viewBox="0 0 17 17"><path d="M2.500 6 L7.800 11.300 L13 6" fill="none" stroke="#5c5c5c" stroke-width="2.600"/></svg>
<!-- bottom tabs -->
<div class="tex" style="left:0;top:677px;width:271px;height:26px;border-top:1px solid #a0a0a0;border-bottom:1px solid #a0a0a0"><svg style="left:0;top:0" width="280" height="26"><filter id="nz" x="0" y="0" width="100%" height="100%"><feTurbulence type="fractalNoise" baseFrequency="0.3 0.22" numOctaves="2" seed="4"/><feColorMatrix type="matrix" values="0 0 0 0 0.93  0 0 0 0 0.93  0 0 0 0 0.93  0.9 0.9 0 0 -0.55"/></filter><rect width="280" height="26" fill="#d4d4d4"/><rect width="280" height="26" filter="url(#nz)" opacity=".9"/></svg></div>
<div style="left:0;top:677px;width:62px;height:25px;background:#f0f0f0;border-right:1px solid #888;border-bottom:1px solid #999;border-radius:0 0 5px 0"></div>
<div style="left:62px;top:677px;width:67px;height:25px;background:#f0f0f0;border:1px solid #999;border-left:none;border-radius:0 0 5px 0"></div>
<span class="tab" style="left:8px;top:681px">Assistant</span><span class="tab" style="left:70px;top:682px">Toolpaths</span>
</div>
<div style="left:270px;top:42px;width:1px;height:705px;background:#a0a0a0"></div>
<div style="left:271px;top:42px;width:3px;height:705px;background:#fafafa"></div>
<div id="main"><div style="left:276px;top:43px;width:814px;height:1px;background:#8a8a8a"></div>
<div style="left:276px;top:74px;width:1px;height:673px;background:#8a8a8a"></div>
<div style="left:1089px;top:44px;width:3px;height:703px;background:#f8f8f8"></div>
<b style="left:285px;top:48px;font-size:15.5px;line-height:17px;transform:scaleX(.77);transform-origin:0 0;-webkit-text-stroke:.35px #000">3D</b>
<svg style="left:304px;top:46.5px" width="24" height="24" viewBox="0 0 24 24"><path d="M15.500 15.500L20.500 19.500L18.500 21.500L14 17Z" fill="#d09858"/><circle cx="11" cy="11" r="6.300" fill="#d8ecf8" stroke="#5070a0" stroke-width="1.300"/><path d="M7 11H15M11 7V15" stroke="#204880" stroke-width="1.500"/></svg><svg style="left:326.5px;top:46.5px" width="24" height="24" viewBox="0 0 24 24"><path d="M15.500 15.500L20.500 19.500L18.500 21.500L14 17Z" fill="#d09858"/><circle cx="11" cy="11" r="6.300" fill="#d8ecf8" stroke="#5070a0" stroke-width="1.300"/><path d="M7 11H15" stroke="#204880" stroke-width="1.700"/></svg><svg style="left:349.5px;top:46.5px" width="24" height="24" viewBox="0 0 24 24"><path d="M15.500 15.500L20.500 19.500L18.500 21.500L14 17Z" fill="#d09858"/><circle cx="11" cy="11" r="6.300" fill="#d8ecf8" stroke="#5070a0" stroke-width="1.300"/><path d="M8.500 9.500C11 6.500 15 8.500 14.500 11.500C14 14 11.500 14.500 10 14" fill="none" stroke="#a0a818" stroke-width="1.800"/><path d="M6.500 8L10.500 8L9 12Z" fill="#a0a818"/></svg><svg style="left:381px;top:46.5px" width="24" height="24" viewBox="0 0 24 24"><path d="M15.500 15.500L20.500 19.500L18.500 21.500L14 17Z" fill="#d09858"/><circle cx="11" cy="11" r="6.300" fill="#d8ecf8" stroke="#5070a0" stroke-width="1.300"/><text x="11" y="13.500" text-anchor="middle" font-family="Liberation Sans,sans-serif" font-weight="bold" font-size="7" fill="#6888b0">1:1</text></svg><svg style="left:403.5px;top:46.5px" width="24" height="24" viewBox="0 0 24 24"><path d="M15.500 15.500L20.500 19.500L18.500 21.500L14 17Z" fill="#d09858"/><circle cx="11" cy="11" r="6.300" fill="#d8ecf8" stroke="#5070a0" stroke-width="1.300"/><rect x="7.500" y="8" width="7" height="5.500" fill="#e8f4fc" stroke="#305890" stroke-width="1.300"/></svg><svg style="left:426px;top:46.5px" width="24" height="24" viewBox="0 0 24 24"><path d="M5 11C5 6 9 4.500 12 5C16 5 18.500 8 18 12L20.500 15.500L21 20H17L15.500 17C11 18.500 5 16 5 11Z" fill="#a8a8a8"/></svg><div style="left:377px;top:49px;width:1px;height:19px;background:#a8a8a8"></div><div style="left:378px;top:49px;width:1px;height:19px;background:#fff"></div><div style="left:454px;top:49px;width:1px;height:19px;background:#a8a8a8"></div><div style="left:455px;top:49px;width:1px;height:19px;background:#fff"></div><div style="left:531px;top:49px;width:1px;height:19px;background:#a8a8a8"></div><div style="left:532px;top:49px;width:1px;height:19px;background:#fff"></div><div style="left:459px;top:48px;width:23px;height:21px;background:#f8f8f8;border:1px solid #fff;border-left-color:#888;border-top-color:#888"></div><div style="left:482px;top:48px;width:23px;height:21px;background:#f8f8f8;border:1px solid #fff;border-left-color:#888;border-top-color:#888"></div><svg style="left:459px;top:47px" width="24" height="24" viewBox="0 0 24 24"><path d="M5 5.500H12M5 8.500H9M5 11.500H8M5 14.500H9M5 17.500H12M5 20.500H14" stroke="#303030" stroke-width="1" stroke-dasharray="1.500 1"/><path d="M9.500 13L14 8.500V11H19.500V15H14V17.500Z" fill="#505050" stroke="#000" stroke-width="1"/></svg><svg style="left:482px;top:47px" width="24" height="24" viewBox="0 0 24 24"><path d="M12 5.500H19M15 8.500H19M16 11.500H19M15 14.500H19M12 17.500H19M10 20.500H19" stroke="#303030" stroke-width="1" stroke-dasharray="1.500 1"/><path d="M19 5V21" stroke="#303030" stroke-width="1"/><path d="M14.500 13L10 8.500V11H4.500V15H10V17.500Z" fill="#505050" stroke="#000" stroke-width="1"/></svg><svg style="left:504px;top:47px" width="24" height="24" viewBox="0 0 24 24"><path d="M4 12L12 7.500V10H15V14.500H12V17Z" fill="#5060b8"/><circle cx="14.500" cy="10.500" r="4.200" fill="#c8d8f0" stroke="#8098c8" stroke-width="1.200" opacity=".9"/><path d="M17.500 13.500L20.500 17.500L19 18.500L16.500 15Z" fill="#d09058"/></svg><div style="left:544px;top:58px;width:74px;height:2px;background:#808080"></div><div style="left:544px;top:60px;width:74px;height:1px;background:#fff"></div><svg style="left:617px;top:49px" width="13" height="22" viewBox="0 0 13 22"><path d="M1 1H10.500V16L6 20.500L1 16Z" fill="#f2f2f2" stroke="#fff" stroke-width="1"/><path d="M10.500 1V16L6 20.500" fill="none" stroke="#606060" stroke-width="1.200"/></svg>
<svg id="rtop" style="left:277px;top:74px" width="794" height="21" viewBox="0 0 794 21">
<rect x="0" y="0" width="794" height="21" fill="#f0f0f0"/>
<path d="M0 0.5H794M0 20.5H794M20.5 0V21" stroke="#8a8a8a" fill="none"/>
<path d="M6 10.5H16M11 5.5V15.5" stroke="#b0b0b0" stroke-dasharray="1 1" fill="none"/>
<path d="M23.5 18V20M29.5 18V20M35.5 18V20M41.5 14V20M47.5 18V20M53.5 18V20M59.5 18V20M65.5 18V20M71.5 16V20M77.5 18V20M83.5 18V20M89.5 18V20M96.5 18V20M102.5 14V20M108.5 18V20M114.5 18V20M120.5 18V20M126.5 18V20M132.5 16V20M138.5 18V20M144.5 18V20M150.5 18V20M156.5 18V20M162.5 14V20M168.5 18V20M174.5 18V20M180.5 18V20M186.5 18V20M192.5 16V20M198.5 18V20M204.5 18V20M211.5 18V20M217.5 18V20M223.5 14V20M229.5 18V20M235.5 18V20M241.5 18V20M247.5 18V20M253.5 16V20M259.5 18V20M265.5 18V20M271.5 18V20M277.5 18V20M283.5 14V20M289.5 18V20M295.5 18V20M301.5 18V20M307.5 18V20M313.5 16V20M320.5 18V20M326.5 18V20M332.5 18V20M338.5 18V20M344.5 14V20M350.5 18V20M356.5 18V20M362.5 18V20M368.5 18V20M374.5 16V20M380.5 18V20M386.5 18V20M392.5 18V20M398.5 18V20M404.5 14V20M410.5 18V20M416.5 18V20M422.5 18V20M429.5 18V20M435.5 16V20M441.5 18V20M447.5 18V20M453.5 18V20M459.5 18V20M465.5 14V20M471.5 18V20M477.5 18V20M483.5 18V20M489.5 18V20M495.5 16V20M501.5 18V20M507.5 18V20M513.5 18V20M519.5 18V20M525.5 14V20M531.5 18V20M538.5 18V20M544.5 18V20M550.5 18V20M556.5 16V20M562.5 18V20M568.5 18V20M574.5 18V20M580.5 18V20M586.5 14V20M592.5 18V20M598.5 18V20M604.5 18V20M610.5 18V20M616.5 16V20M622.5 18V20M628.5 18V20M634.5 18V20M640.5 18V20M646.5 14V20M653.5 18V20M659.5 18V20M665.5 18V20M671.5 18V20M677.5 16V20M683.5 18V20M689.5 18V20M695.5 18V20M701.5 18V20M707.5 14V20M713.5 18V20M719.5 18V20M725.5 18V20M731.5 18V20M737.5 16V20M743.5 18V20M749.5 18V20M755.5 18V20M762.5 18V20M768.5 14V20M774.5 18V20M780.5 18V20M786.5 18V20" stroke="#000" fill="none"/>
<text x="41.5" y="12" text-anchor="middle" class="rl">-1200</text>
<text x="102.1" y="12" text-anchor="middle" class="rl">-1000</text>
<text x="162.6" y="12" text-anchor="middle" class="rl">-800</text>
<text x="223.2" y="12" text-anchor="middle" class="rl">-600</text>
<text x="283.7" y="12" text-anchor="middle" class="rl">-400</text>
<text x="344.3" y="12" text-anchor="middle" class="rl">-200</text>
<text x="404.8" y="12" text-anchor="middle" class="rl">0</text>
<text x="465.3" y="12" text-anchor="middle" class="rl">200</text>
<text x="525.9" y="12" text-anchor="middle" class="rl">400</text>
<text x="586.4" y="12" text-anchor="middle" class="rl">600</text>
<text x="647.0" y="12" text-anchor="middle" class="rl">800</text>
<text x="707.5" y="12" text-anchor="middle" class="rl">1000</text>
<path d="M156.500 3V17.500M156.500 13.500H159" stroke="#000" fill="none"/>
<text x="772" y="11.5" text-anchor="middle" class="rs">millimetres</text>
</svg><svg id="rleft" style="left:277px;top:95px" width="21" height="590" viewBox="0 0 21 590">
<rect x="0" y="0" width="21" height="590" fill="#f0f0f0"/>
<path d="M0.5 0V590M20.5 0V590" stroke="#8a8a8a" fill="none"/>
<path d="M18 584.5H20M18 578.5H20M18 572.5H20M16 566.5H20M18 560.5H20M18 554.5H20M18 548.5H20M18 542.5H20M14 535.5H20M18 529.5H20M18 523.5H20M18 517.5H20M18 511.5H20M16 505.5H20M18 499.5H20M18 493.5H20M18 487.5H20M18 481.5H20M14 475.5H20M18 469.5H20M18 463.5H20M18 457.5H20M18 451.5H20M16 445.5H20M18 439.5H20M18 433.5H20M18 427.5H20M18 420.5H20M14 414.5H20M18 408.5H20M18 402.5H20M18 396.5H20M18 390.5H20M16 384.5H20M18 378.5H20M18 372.5H20M18 366.5H20M18 360.5H20M14 354.5H20M18 348.5H20M18 342.5H20M18 336.5H20M18 330.5H20M16 324.5H20M18 318.5H20M18 311.5H20M18 305.5H20M18 299.5H20M14 293.5H20M18 287.5H20M18 281.5H20M18 275.5H20M18 269.5H20M16 263.5H20M18 257.5H20M18 251.5H20M18 245.5H20M18 239.5H20M14 233.5H20M18 227.5H20M18 221.5H20M18 215.5H20M18 209.5H20M16 202.5H20M18 196.5H20M18 190.5H20M18 184.5H20M18 178.5H20M14 172.5H20M18 166.5H20M18 160.5H20M18 154.5H20M18 148.5H20M16 142.5H20M18 136.5H20M18 130.5H20M18 124.5H20M18 118.5H20M14 112.5H20M18 106.5H20M18 100.5H20M18 93.5H20M18 87.5H20M16 81.5H20M18 75.5H20M18 69.5H20M18 63.5H20M18 57.5H20M14 51.5H20M18 45.5H20M18 39.5H20M18 33.5H20M18 27.5H20M16 21.5H20M18 15.5H20M18 9.5H20M18 3.5H20" stroke="#000" fill="none"/>
<text transform="translate(12,536.0) rotate(-90)" text-anchor="middle" class="rl">-800</text>
<text transform="translate(12,475.4) rotate(-90)" text-anchor="middle" class="rl">-600</text>
<text transform="translate(12,414.9) rotate(-90)" text-anchor="middle" class="rl">-400</text>
<text transform="translate(12,354.3) rotate(-90)" text-anchor="middle" class="rl">-200</text>
<text transform="translate(12,293.8) rotate(-90)" text-anchor="middle" class="rl">0</text>
<text transform="translate(12,233.3) rotate(-90)" text-anchor="middle" class="rl">200</text>
<text transform="translate(12,172.7) rotate(-90)" text-anchor="middle" class="rl">400</text>
<text transform="translate(12,112.2) rotate(-90)" text-anchor="middle" class="rl">600</text>
<text transform="translate(12,51.6) rotate(-90)" text-anchor="middle" class="rl">800</text>
<path d="M1 6.500H19" stroke="#000" stroke-width="1" fill="none"/>
</svg><!-- canvas area -->
<div style="left:298px;top:95px;width:773px;height:590px;background:#f0f0f0"></div>
<div style="left:560px;top:115px;width:245px;height:548px;background:#ffff80;border:1px solid #000"></div>
<svg style="left:600px;top:230px" width="165" height="222" viewBox="600 230 165 222">
<defs>
<linearGradient id="fRobe" x1="0" y1="0" x2="1" y2="0"><stop offset="0" stop-color="#5c5c5c"/><stop offset=".3" stop-color="#888"/><stop offset=".5" stop-color="#a4a4a4"/><stop offset=".7" stop-color="#888"/><stop offset="1" stop-color="#5c5c5c"/></linearGradient>
<linearGradient id="fCapeL" x1="0" y1="0" x2="1" y2="0"><stop offset="0" stop-color="#4e4e4e"/><stop offset=".3" stop-color="#7c7c7c"/><stop offset=".65" stop-color="#a0a0a0"/><stop offset="1" stop-color="#c8c8c8"/></linearGradient>
<linearGradient id="fCapeR" x1="1" y1="0" x2="0" y2="0"><stop offset="0" stop-color="#4e4e4e"/><stop offset=".3" stop-color="#7c7c7c"/><stop offset=".65" stop-color="#a0a0a0"/><stop offset="1" stop-color="#c8c8c8"/></linearGradient>
<linearGradient id="fDark" x1="0" y1="0" x2="0" y2="1"><stop offset="0" stop-color="#000" stop-opacity=".38"/><stop offset=".6" stop-color="#000" stop-opacity=".12"/><stop offset="1" stop-color="#000" stop-opacity="0"/></linearGradient>
<radialGradient id="fHead" cx=".5" cy=".55" r=".6"><stop offset="0" stop-color="#d4d4d4"/><stop offset=".6" stop-color="#adadad"/><stop offset="1" stop-color="#858585"/></radialGradient>
<radialGradient id="fCuff" cx=".5" cy=".45" r=".55"><stop offset="0" stop-color="#d8d8d8"/><stop offset=".7" stop-color="#b0b0b0"/><stop offset="1" stop-color="#8c8c8c"/></radialGradient>
<radialGradient id="fCuffL" cx=".55" cy=".5" r=".55"><stop offset="0" stop-color="#bcbcbc"/><stop offset=".7" stop-color="#8e8e8e"/><stop offset="1" stop-color="#6c6c6c"/></radialGradient>
<linearGradient id="fTorso" x1="0" y1="0" x2="1" y2="0"><stop offset="0" stop-color="#626262"/><stop offset=".5" stop-color="#8c8c8c"/><stop offset="1" stop-color="#626262"/></linearGradient>
<linearGradient id="fCrown" x1="0" y1="0" x2="1" y2="0"><stop offset="0" stop-color="#505050"/><stop offset=".5" stop-color="#a0a0a0"/><stop offset="1" stop-color="#505050"/></linearGradient>
</defs>
<!-- dark underside of cape -->
<path d="M613 428C630 432 652 433 673 427L693 427C714 433 736 432 753 428C749 435 734 440 714 443L646 443C632 440 617 435 613 428Z" fill="#1a1a1a"/>
<!-- inner robe -->
<path d="M664 335L700 335L714 446C700 448 660 448 646 446Z" fill="url(#fRobe)"/>
<path d="M672 345L670 446M682 345V446M692 345L695 446" stroke="#7a7a7a" stroke-width="1.500" fill="none" opacity=".5"/>
<path d="M646 438C660 441 700 441 714 438L714 446C700 448 660 448 646 446Z" fill="#6a6a6a"/>
<!-- cape panels -->
<path id="cpl" d="M643 312L666 310L668 350L675 427C655 434 632 433 612.500 428L644 352Z" fill="url(#fCapeL)"/>
<path id="cpr" d="M704 308L698 310L697 350L691 427C711 434 734 433 753.500 428L728 352L722 330Z" fill="url(#fCapeR)"/>
<path d="M643 312L666 310L668 350L675 427C655 434 632 433 612.500 428L644 352Z" fill="url(#fDark)"/>
<path d="M704 308L698 310L697 350L691 427C711 434 734 433 753.500 428L728 352L722 330Z" fill="url(#fDark)"/>
<path d="M613 428C630 432 655 432 675 426" fill="none" stroke="#8c8c8c" stroke-width="2.500"/><path d="M753 428C736 432 711 432 691 426" fill="none" stroke="#8c8c8c" stroke-width="2.500"/>
<path d="M652 350C648 380 638 410 628 430M737 430C728 410 718 380 713 355" stroke="#6c6c6c" stroke-width="2.500" fill="none" opacity=".5"/>
<!-- torso and shoulders -->
<path d="M665 300C672 297 690 297 698 300L710 310L722 330L700 345L664 345L645 338L646 318Z" fill="url(#fTorso)"/>
<path d="M666 300C660 304 648 310 644 320C641 330 641 340 646 346L662 342C660 330 662 316 668 306Z" fill="#747474"/>
<path d="M697 300C705 304 716 312 722 324L716 334L700 326Z" fill="#7c7c7c"/>
<!-- ruff/collar -->
<path d="M668 300C674 306 690 306 696 300L702 310L692 317L682 312L674 317L662 311Z" fill="#a4a4a4"/>
<!-- left cuff (viewer left) and raised hand -->
<path d="M642 316C648 310 660 312 668 318L670 336C664 345 650 345 643 339C639 333 639 322 642 316Z" fill="url(#fCuffL)"/>
<g fill="#8a8a8a"><circle cx="646" cy="339" r="2.500"/><circle cx="651" cy="342.500" r="2.500"/><circle cx="657" cy="343.500" r="2.500"/><circle cx="663" cy="341.500" r="2.500"/></g>
<path d="M657 300L660 299L664 312L667 318L663 325L657 323L655 312Z" fill="#b4b4b4"/>
<!-- right cuff (viewer right) scalloped -->
<circle cx="708" cy="344" r="16" fill="url(#fCuff)"/>
<g fill="#aaa"><circle cx="692" cy="347" r="3"/><circle cx="695" cy="354" r="3"/><circle cx="701" cy="358.500" r="3"/><circle cx="708" cy="360" r="3"/><circle cx="715" cy="358.500" r="3"/><circle cx="721" cy="354" r="3"/><circle cx="724" cy="347" r="3"/></g>
<!-- orb -->
<circle cx="708" cy="330" r="9.500" fill="url(#fHead)"/>
<path d="M709.500 308V317M706.500 311.500H712.500" stroke="#2a2a2a" stroke-width="1.600"/>
<path d="M704 333C705 338 711 338 712 333L711 341H705Z" fill="#d4d4d4"/>
<!-- chain and cross -->
<path d="M671 300L682 343L690 300" fill="none" stroke="#e2e2e2" stroke-width="1"/>
<path d="M679.500 343.500H684V347H688V352H684V358H679.500V352H675.500V347H679.500Z" fill="#e0e0e0"/>
<!-- neck -->
<path d="M673 294H689V301C684 304 678 304 673 301Z" fill="#3e3e3e"/>
<!-- head -->
<path d="M663 280C662 272 668 268 680 268C692 268 698 272 697 280C698 288 694 294 688 296C684 298 676 298 672 296C666 294 662 288 663 280Z" fill="url(#fHead)"/>
<path d="M675 281H679M683 281H687M680 284L679.500 289H682" stroke="#8a8a8a" stroke-width=".8" fill="none"/>
<!-- crown -->
<path d="M660 252L666 256L669 250L674 255L679.500 248L685 255L690 250L693 256L699 252L694 268C688 271 671 271 665 268Z" fill="url(#fCrown)"/>
<path d="M665 263C672 266 687 266 694 263" stroke="#b8b8b8" stroke-width="1" fill="none"/>
<path d="M679 237V249M676.500 240H681.500" stroke="#c8c8a8" stroke-width="1.400"/>
</svg>

<!-- ruler right button -->
<div style="left:1070px;top:74px;width:18px;height:21px;background:#f0f0f0;border:1px solid #fff;border-right-color:#777;border-bottom-color:#777"></div>
<svg style="left:1070px;top:74px" width="18" height="21" viewBox="0 0 18 21"><path d="M5 8.500H8M10 8.500H13" stroke="#000" fill="none"/><path d="M4.500 10.500H13.500L9 15Z" fill="#000"/></svg>
<!-- v scrollbar -->
<div style="left:1072px;top:95px;width:16px;height:590px;background:#f0f0f0"></div>
<div style="left:1072px;top:112px;width:15px;height:556px;background:#cdcdcd"></div>
<svg style="left:1072px;top:96px" width="15" height="16" viewBox="0 0 15 16"><path d="M3.500 10 L7.500 6 L11.500 10" fill="none" stroke="#555" stroke-width="1.8"/></svg>
<svg style="left:1072px;top:669px" width="15" height="16" viewBox="0 0 15 16"><path d="M3.500 6 L7.500 10 L11.500 6" fill="none" stroke="#555" stroke-width="1.8"/></svg>
<!-- h scrollbar -->
<div style="left:277px;top:685px;width:813px;height:21px;background:#f0f0f0"></div>
<div style="left:315px;top:686px;width:739px;height:15px;background:#cdcdcd"></div>
<svg style="left:298px;top:686px" width="16" height="15" viewBox="0 0 16 15"><path d="M10 3.500 L6 7.500 L10 11.500" fill="none" stroke="#555" stroke-width="1.8"/></svg>
<svg style="left:1055px;top:686px" width="16" height="15" viewBox="0 0 16 15"><path d="M6 3.500 L10 7.500 L6 11.500" fill="none" stroke="#555" stroke-width="1.8"/></svg>
<div style="left:277px;top:685px;width:21px;height:17px;background:#f0f0f0;border:1px solid #fff;border-right-color:#777;border-bottom-color:#777"></div>
<svg style="left:277px;top:685px" width="21" height="17" viewBox="0 0 21 17"><path d="M7.500 4V6M7.500 7.500V9.500M7.500 11V13" stroke="#000" fill="none"/><path d="M9.500 4V13L14 8.500Z" fill="#000"/></svg>
</div><div style="left:277px;top:706px;width:813px;height:1px;background:#a0a0a0"></div>
<div style="left:277px;top:746px;width:813px;height:1px;background:#fff"></div>
<div style="left:298px;top:723px;width:25px;height:20px;background:#000"></div>
<div style="left:283px;top:711px;width:25px;height:20px;background:#fff;border:1px solid #222;box-shadow:1px 1px 0 #999"></div>
<svg style="left:311px;top:711px" width="13" height="11" viewBox="0 0 13 11"><rect x="0.500" y="0.500" width="7" height="5" rx="2.500" fill="none" stroke="#000"/><rect x="3.500" y="3.500" width="8" height="5.500" rx="2.700" fill="none" stroke="#000"/></svg>
<div class="sw" style="left:333px;background:#ffffff"></div>
<div class="sw" style="left:368px;background:#000000"></div>
<div class="sw" style="left:403px;background:#00ffff"></div>
<div class="sw" style="left:438px;background:#2f3fdf"></div>
<div class="sw" style="left:473px;background:#5bbf57"></div>
<div class="sw" style="left:508px;background:#d81024"></div>
<div class="sw" style="left:543px;background:#a030e0"></div>
<div class="sw" style="left:578px;background:#ffff80"></div>
<div class="sw" style="left:613px;background:#b0a030"></div>
<div class="sw" style="left:648px;background:#ffcc10"></div>
<div class="sw" style="left:683px;background:#050505"></div>
<div class="sw" style="left:718px;background:#050505"></div>
<div class="sw" style="left:753px;background:#050505"></div>
<div class="sw" style="left:788px;background:#050505"></div>
<div class="sw" style="left:823px;background:#050505"></div>
<div class="sw" style="left:858px;background:#050505"></div>
<div class="sw" style="left:893px;background:#050505"></div>
<div class="sw" style="left:928px;background:#050505"></div>
<div class="sw" style="left:963px;background:#050505"></div>
<div class="sw" style="left:998px;background:#050505"></div>
<div class="sw" style="left:1033px;background:#050505"></div>
<svg style="left:1071px;top:708px" width="16" height="38" viewBox="0 0 16 38"><path d="M4 10.500L8 6.500L12 10.500M4 27L8 31L12 27" fill="none" stroke="#555" stroke-width="1.8"/></svg>
<div style="left:1093px;top:44px;width:1px;height:703px;background:#a0a0a0"></div>
<div style="left:1365px;top:44px;width:1px;height:678px;background:#a0a0a0"></div>
<div class="rh" style="top:45px"><b>Vectors</b><div class="rbtn"></div><svg style="left:225px;top:1px" width="12" height="13"><path d="M2 3H10L6 10Z" fill="#30343c"/></svg></div>
<div class="rh" style="top:76px"><b>Bitmaps</b><div class="rbtn"></div><svg style="left:225px;top:1px" width="12" height="13"><path d="M2 10H10L6 3Z" fill="#30343c"/></svg></div>
<div style="left:1323px;top:95px;width:18px;height:17px;background:#f8f8f8;border-left:1px solid #999;border-top:1px solid #999"></div><svg style="left:1099px;top:90px" width="26" height="26" viewBox="0 0 32 32"><path d="M20 19H24.500L22 26H14Z" fill="#bcbcbc"/><path d="M8 4.500H16L20.500 9V26H8Z" fill="url(#gDoc)"/><path d="M16 4.500L20.500 9H16Z" fill="#f4f6fa"/></svg><svg style="left:1132px;top:93px" width="21" height="21" viewBox="0 0 32 32"><path d="M22 22L29 20L27 25L14 27Z" fill="#c4c4c4"/><path d="M4 9L6 7L12 6L14 8L21 8L22 14L4 17Z" fill="#f4e428"/><path d="M3.500 15L27 11.500L25.500 22L6 26.500Z" fill="#f0dc18"/><path d="M6 26.500L25.500 22L25 19L7 23Z" fill="#d4bc10"/><path d="M4 9L6 7L12 6L14 8L21 8" fill="none" stroke="#fff488" stroke-width=".8"/></svg><svg style="left:1163px;top:94px" width="21" height="21" viewBox="0 0 32 32"><path d="M25 20H30L27 27H22Z" fill="#c4c4c4"/><path d="M5.500 7H25.500V27.500H8L5.500 25Z" fill="#1c50c0"/><rect x="9" y="7.500" width="13" height="10" fill="#d4d4d4"/><rect x="9" y="7.500" width="13" height="3" fill="#eeeeee"/><rect x="10" y="20.500" width="11" height="7" fill="#b4b8c0"/><rect x="12" y="22" width="3" height="4.500" fill="#2050c0"/></svg><svg style="left:1195px;top:93.5px" width="21" height="21" viewBox="0 0 32 32"><path d="M20 20H30L27 29H18Z" fill="#c0c0c0"/><path d="M5 3L8 4L11 3L14 4L17 3L20 5L24 12L26 27H8L7 24L9 21L7 18L9 15L7 12L9 9L6 7Z" fill="url(#gTan)"/><path d="M10 8H18M10 12H20M11 16H21M11 20H22M11 24H22" stroke="#9a7848" stroke-width="1"/></svg><svg style="left:1227px;top:93.5px" width="21" height="21" viewBox="0 0 32 32"><path d="M26 18H31L28 27H24Z" fill="#b8b8b8"/><rect x="4" y="4" width="22" height="23" fill="url(#gSq)"/></svg><svg style="left:1258px;top:93.5px" width="21" height="21" viewBox="0 0 32 32"><path d="M12 14H28L31 28H9Z" fill="#7078c8"/><path d="M12 14H28L29 17H11Z" fill="#9098d8"/><rect x="2" y="2" width="17" height="20" fill="#787828"/><rect x="2" y="2" width="17" height="8" fill="#c0b880"/><path d="M5 22C4 12 6 4.500 10.500 4.500C15 4.500 17 12 16 22Z" fill="#181008"/><ellipse cx="10.500" cy="9.500" rx="2.800" ry="3.600" fill="#e8c078"/><path d="M8 16C9.500 14 12 14 13.500 16L13 19H8.500Z" fill="#d8a860"/></svg><svg style="left:1291.5px;top:95px" width="17" height="17" viewBox="0 0 32 32"><path d="M7 9H25L22.500 27C20 29 12 29 9.500 27Z" fill="#3878e0"/><path d="M7 9H12L13 28C11 28 10 27.500 9.500 27Z" fill="#70a8f0"/><ellipse cx="16" cy="8.500" rx="9.500" ry="3.500" fill="#88b8f8" stroke="#2860c0" stroke-width="1"/><ellipse cx="16" cy="8.500" rx="5" ry="1.500" fill="#e8f0ff"/></svg><svg style="left:1321px;top:93.5px" width="21" height="21" viewBox="0 0 32 32"><circle cx="11" cy="13" r="7.5" fill="url(#gBulb)"/><path d="M6.875 19.0H15.125V27.25H6.875Z" fill="#603810"/><path d="M6.875 17.5L15.125 17.5L14.375 21.25L7.625 21.25Z" fill="#e8a020"/><circle cx="22" cy="10" r="7.5" fill="url(#gBulb)"/><path d="M17.875 16.0H26.125V24.25H17.875Z" fill="#603810"/><path d="M17.875 14.5L26.125 14.5L25.375 18.25L18.625 18.25Z" fill="#e8a020"/></svg>
<div style="left:1102px;top:118px;width:243px;height:23px;background:#d8d8d8"></div>
<span class="t" style="left:1128px;top:123px">Bitmap Layer 1</span>
<div class="rh" style="top:157px"><b>Reliefs</b><div class="rbtn"></div><svg style="left:225px;top:1px" width="12" height="13"><path d="M2 10H10L6 3Z" fill="#30343c"/></svg></div>
<div style="left:1103px;top:174px;width:239px;height:22px;background:#fff;border:1px solid #6a6a6a;border-top:2px solid #6a6a6a;border-right-color:#ddd;border-bottom-color:#ddd"></div>
<span class="t" style="left:1105px;top:176px">Front Relief</span>
<div style="left:1325px;top:175px;width:17px;height:20px;background:#f0f0f0;border:1px solid #fff;border-right:2px solid #777;border-bottom:2px solid #777"></div>
<svg style="left:1325px;top:175px" width="17" height="20"><path d="M4 8.500H11L7.500 12Z" fill="#000"/></svg>
<div style="left:1323px;top:202px;width:18px;height:17px;background:#f8f8f8;border-left:1px solid #999;border-top:1px solid #999"></div><svg style="left:1099px;top:197px" width="26" height="26" viewBox="0 0 32 32"><path d="M20 19H24.500L22 26H14Z" fill="#bcbcbc"/><path d="M8 4.500H16L20.500 9V26H8Z" fill="url(#gDoc)"/><path d="M16 4.500L20.500 9H16Z" fill="#f4f6fa"/></svg><svg style="left:1127.5px;top:200px" width="21" height="21" viewBox="0 0 32 32"><path d="M22 22L29 20L27 25L14 27Z" fill="#c4c4c4"/><path d="M4 9L6 7L12 6L14 8L21 8L22 14L4 17Z" fill="#f4e428"/><path d="M3.500 15L27 11.500L25.500 22L6 26.500Z" fill="#f0dc18"/><path d="M6 26.500L25.500 22L25 19L7 23Z" fill="#d4bc10"/><path d="M4 9L6 7L12 6L14 8L21 8" fill="none" stroke="#fff488" stroke-width=".8"/></svg><svg style="left:1154px;top:201px" width="21" height="21" viewBox="0 0 32 32"><path d="M25 20H30L27 27H22Z" fill="#c4c4c4"/><path d="M5.500 7H25.500V27.500H8L5.500 25Z" fill="#1c50c0"/><rect x="9" y="7.500" width="13" height="10" fill="#d4d4d4"/><rect x="9" y="7.500" width="13" height="3" fill="#eeeeee"/><rect x="10" y="20.500" width="11" height="7" fill="#b4b8c0"/><rect x="12" y="22" width="3" height="4.500" fill="#2050c0"/></svg><svg style="left:1183px;top:200.5px" width="21" height="21" viewBox="0 0 32 32"><path d="M20 20H30L27 29H18Z" fill="#c0c0c0"/><path d="M5 3L8 4L11 3L14 4L17 3L20 5L24 12L26 27H8L7 24L9 21L7 18L9 15L7 12L9 9L6 7Z" fill="url(#gTan)"/><path d="M10 8H18M10 12H20M11 16H21M11 20H22M11 24H22" stroke="#9a7848" stroke-width="1"/></svg><svg style="left:1210.5px;top:200px" width="21" height="21" viewBox="0 0 32 32"><path d="M3 22L16 16L29 22L16 29Z" fill="#a81818"/><path d="M3 22L16 29V31L3 24Z" fill="#701010"/><path d="M16 29L29 22V24L16 31Z" fill="#881414"/><path d="M3 11L16 5L29 11L16 18Z" fill="#8088e0"/><path d="M12 19H20L16 25Z" fill="#f0c020"/><path d="M14.500 14H17.500V20H14.500Z" fill="#f0c020"/></svg><svg style="left:1238.5px;top:200px" width="21" height="21" viewBox="0 0 32 32"><path d="M6 3H20L26 9V29H6Z" fill="url(#gDoc)"/><path d="M20 3L26 9H20Z" fill="#f0f4f8"/><circle cx="16" cy="16" r="7" fill="url(#gBulb)"/><path d="M12.149999999999999 21.6H19.85V29.299999999999997H12.149999999999999Z" fill="#603810"/><path d="M12.149999999999999 20.2L19.85 20.2L19.15 23.700000000000003L12.85 23.700000000000003Z" fill="#e8a020"/></svg><svg style="left:1266px;top:200px" width="21" height="21" viewBox="0 0 32 32"><rect x="2" y="3" width="28" height="26" fill="#080808"/><g transform="translate(1.500,2) scale(.92)"><circle cx="10.500" cy="8" r="2.300" fill="#c0c0c0"/><circle cx="19.500" cy="8" r="2.300" fill="#c0c0c0"/><ellipse cx="15" cy="11" rx="5.500" ry="4.800" fill="#c0c0c0"/><path d="M8 15L3.500 18L5 21L9 19Z M22 15L26.500 18L25 21L21 19Z" fill="#c0c0c0"/><ellipse cx="15" cy="20.500" rx="7.500" ry="6.800" fill="#d0d0d0"/><ellipse cx="15" cy="21.500" rx="4.500" ry="4" fill="#909090"/><ellipse cx="9.500" cy="26" rx="3" ry="2.300" fill="#c0c0c0"/><ellipse cx="20.500" cy="26" rx="3" ry="2.300" fill="#c0c0c0"/><ellipse cx="15" cy="12.500" rx="2.200" ry="1.600" fill="#909090"/></g><path d="M24 8H28M26 8V12" stroke="#fff" stroke-width="1.400"/></svg><svg style="left:1295px;top:202px" width="17" height="17" viewBox="0 0 32 32"><path d="M7 9H25L22.500 27C20 29 12 29 9.500 27Z" fill="#3878e0"/><path d="M7 9H12L13 28C11 28 10 27.500 9.500 27Z" fill="#70a8f0"/><ellipse cx="16" cy="8.500" rx="9.500" ry="3.500" fill="#88b8f8" stroke="#2860c0" stroke-width="1"/><ellipse cx="16" cy="8.500" rx="5" ry="1.500" fill="#e8f0ff"/></svg><svg style="left:1321px;top:200.5px" width="21" height="21" viewBox="0 0 32 32"><circle cx="11" cy="13" r="7.5" fill="url(#gBulb)"/><path d="M6.875 19.0H15.125V27.25H6.875Z" fill="#603810"/><path d="M6.875 17.5L15.125 17.5L14.375 21.25L7.625 21.25Z" fill="#e8a020"/><circle cx="22" cy="10" r="7.5" fill="url(#gBulb)"/><path d="M17.875 16.0H26.125V24.25H17.875Z" fill="#603810"/><path d="M17.875 14.5L26.125 14.5L25.375 18.25L18.625 18.25Z" fill="#e8a020"/></svg>
<div style="left:1102px;top:224px;width:243px;height:26px;background:#d8d8d8"></div>
<svg style="left:1137px;top:232px" width="8" height="10"><path d="M2 1L6 5L2 9Z" fill="#000"/></svg>
<span class="t" style="left:1149px;top:230px">Relief Layer 1</span>
<div style="left:1323px;top:228px;width:17px;height:18px;background:#e4e4e4;border:1px solid #999;border-right-color:#fff;border-bottom-color:#fff"></div>
<div style="left:1312px;top:253px;width:12px;height:12px;background:#16408f;border-radius:1px"></div>
<div style="left:1330px;top:253px;width:12px;height:12px;background:#16408f;border-radius:1px"></div>
<svg style="left:1312px;top:253px" width="30" height="12"><path d="M6 10V3M3 6L6 2.500L9 6M24 2V9M21 6L24 9.500L27 6" stroke="#fff" stroke-width="1.6" fill="none"/></svg>
<svg style="left:1105px;top:120px" width="17" height="17" viewBox="0 0 32 32"><rect x="1" y="1" width="30" height="30" fill="#7c7c2c"/><rect x="1" y="1" width="30" height="12" fill="#c4bc84"/><path d="M5 31C3 16 7 4 16 4C25 4 29 16 27 31Z" fill="#181008"/><ellipse cx="16" cy="12" rx="4.800" ry="6" fill="#ecc47c"/><path d="M10 31C10 24 13 21 16 21C19 21 22 24 22 31Z" fill="#ecd890"/><path d="M13 22C14.500 20 17.500 20 19 22L18 26H14Z" fill="#d8a860"/></svg><svg style="left:1110.5px;top:225px" width="22" height="22" viewBox="0 0 32 32"><path d="M4 22C4 10 14 6 22 8C28 10 31 16 31 20L26 22C26 17 22 13 17 13C11 13 9 18 9 22Z" fill="#d0a850"/><path d="M4 22C4 10 14 6 22 8C28 10 31 16 31 20" fill="none" stroke="#a07828" stroke-width="1"/><path d="M9 22C9 17 12 13 17 13C22 13 26 17 26 22Z" fill="#8890d8"/><path d="M2 27H11M6.500 22.500V31.500" stroke="#000" stroke-width="1.500"/></svg><svg style="left:1323px;top:229.5px" width="17" height="17" viewBox="0 0 32 32"><circle cx="16" cy="12" r="8.5" fill="url(#gBulb)"/><path d="M11.325 18.8H20.675V28.15H11.325Z" fill="#603810"/><path d="M11.325 17.1L20.675 17.1L19.825 21.35L12.175 21.35Z" fill="#e8a020"/></svg>
<!-- tabs -->
<div class="tex" style="left:1094px;top:721px;width:272px;height:26px;border-bottom:1px solid #a0a0a0"><svg style="left:0;top:0" width="280" height="26"><filter id="nz2" x="0" y="0" width="100%" height="100%"><feTurbulence type="fractalNoise" baseFrequency="0.3 0.22" numOctaves="2" seed="4"/><feColorMatrix type="matrix" values="0 0 0 0 0.93  0 0 0 0 0.93  0 0 0 0 0.93  0.9 0.9 0 0 -0.55"/></filter><rect width="280" height="26" fill="#d4d4d4"/><rect width="280" height="26" filter="url(#nz2)" opacity=".9"/></svg></div>
<div style="left:1144px;top:721px;width:222px;height:1px;background:#999"></div>
<div style="left:1094px;top:721px;width:50px;height:25px;background:#f0f0f0;border-right:1px solid #888;border-bottom:1px solid #999;border-radius:0 0 5px 0"></div>
<div style="left:1144px;top:721px;width:48px;height:25px;background:#f0f0f0;border:1px solid #999;border-left:none;border-radius:0 0 5px 0"></div>
<span class="tab" style="left:1103px;top:725px">Layers</span><span class="tab" style="left:1151px;top:726px">Add In</span>
<div style="left:0;top:747px;width:1366px;height:20px;background:#f0f0f0"></div>
<div class="sb" style="left:1023px;width:66px"><span>X: -823.706</span></div>
<div class="sb" style="left:1092px;width:66px"><span>Y: 950.717</span></div>
<div class="sb" style="left:1161px;width:60px"></div>
<div class="sb" style="left:1225px;width:69px"></div>
<div class="sb" style="left:1297px;width:69px"></div>

</div></body></html>
